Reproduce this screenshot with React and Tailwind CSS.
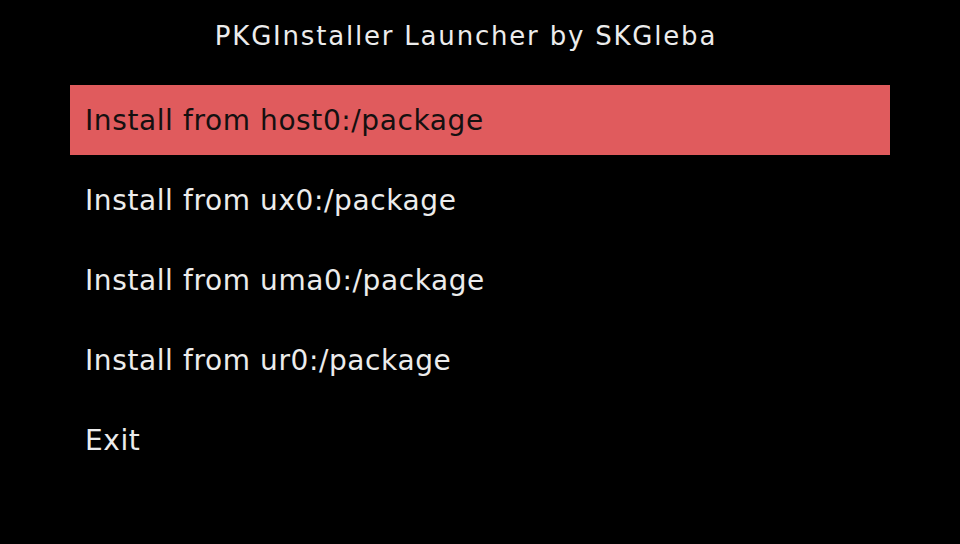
import React from "react";

const ITEMS = [
  "Install from host0:/package",
  "Install from ux0:/package",
  "Install from uma0:/package",
  "Install from ur0:/package",
  "Exit",
];

export default function App() {
  const selected = 0;
  return (
    <div className="w-[960px] h-[544px] bg-black overflow-hidden font-['DejaVu_Sans',Verdana,sans-serif]">
      <div className="h-[72px] flex items-center justify-center pr-[28px]">
        <h1 className="text-[26px] text-[#ececec] tracking-[1.8px]">PKGInstaller Launcher by SKGleba</h1>
      </div>
      <ul className="flex flex-col gap-[10px] mx-[70px] mt-[13px]">
        {ITEMS.map((item, i) => (
          <li
            key={item}
            className={
              i === selected
                ? "h-[70px] flex items-center px-[15px] pt-[2px] bg-[#e05b5d] text-[#141010] text-[28px] tracking-[0.6px]"
                : "h-[70px] flex items-center px-[15px] pt-[2px] text-[#ececec] text-[28px] tracking-[0.6px]"
            }
          >
            {item}
          </li>
        ))}
      </ul>
    </div>
  );
}
